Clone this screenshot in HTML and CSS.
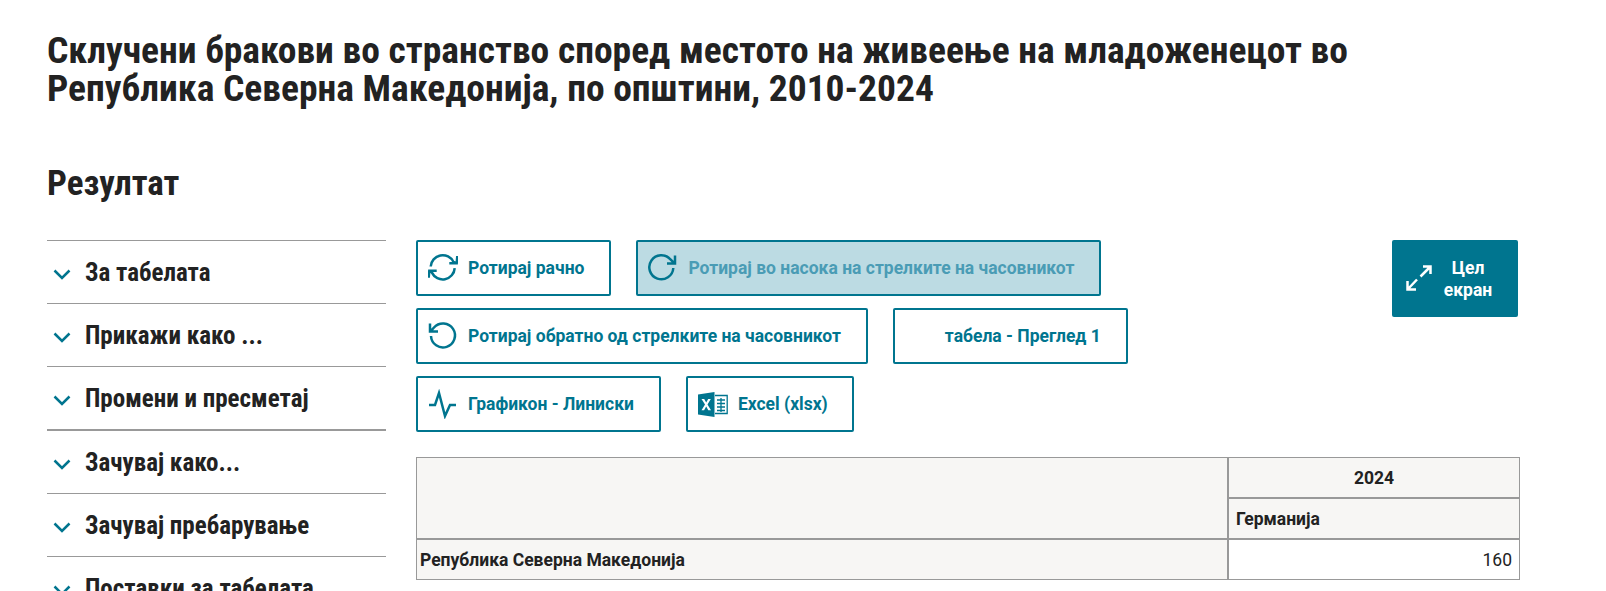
FILE: index.html
```html
<!DOCTYPE html>
<html lang="mk">
<head>
<meta charset="utf-8">
<title>Резултат</title>
<link rel="stylesheet" href="styles.css">
</head>
<body>
<main class="page">
<h1 class="title">Склучени бракови во странство според местото на живеење на младоженецот во Република Северна Македонија, по општини, 2010-2024</h1>
<h2 class="result">Резултат</h2>
<div class="cols">
<nav class="side">
<div class="acc"><svg class="chev" viewBox="0 0 18 11"><path d="M1.500 1.500 9 9l7.500-7.500"/></svg>За табелата</div>
<div class="acc"><svg class="chev" viewBox="0 0 18 11"><path d="M1.500 1.500 9 9l7.500-7.500"/></svg>Прикажи како ...</div>
<div class="acc acc-thick"><svg class="chev" viewBox="0 0 18 11"><path d="M1.500 1.500 9 9l7.500-7.500"/></svg>Промени и пресметај</div>
<div class="acc"><svg class="chev" viewBox="0 0 18 11"><path d="M1.500 1.500 9 9l7.500-7.500"/></svg>Зачувај како...</div>
<div class="acc"><svg class="chev" viewBox="0 0 18 11"><path d="M1.500 1.500 9 9l7.500-7.500"/></svg>Зачувај пребарување</div>
<div class="acc"><svg class="chev" viewBox="0 0 18 11"><path d="M1.500 1.500 9 9l7.500-7.500"/></svg>Поставки за табелата</div>
</nav>
<section class="content">
<div class="top">
<div class="btns">
<button class="btn"><svg class="ic" viewBox="0 1 30 30"><path d="M2.700 14.500A12 12 0 0 1 25.500 10l3.200 1.300M29.300 4l-.6 7.300h-7.400M26.700 16.100A12 12 0 0 1 3.900 20.600l-2.600-1.900M.7 25.700l.6-7h7.400"/></svg>Ротирај рачно</button>
<button class="btn on"><svg class="ic" viewBox="0 1 30 30"><path d="M25.300 16A12 12 0 1 1 22.500 7.500l4 3.800M27 3.500v8h-8"/></svg><span class="dim">Ротирај во насока на стрелките на часовникот</span></button>
<button class="btn"><svg class="ic" viewBox="0 1 30 30"><path d="M3 16A12 12 0 1 0 6 7.500l-3.500 3.800M2 3.500v8h8"/></svg>Ротирај обратно од стрелките на часовникот</button>
<button class="btn plain">табела - Преглед 1</button>
<button class="btn"><svg class="ic" viewBox="0 -1 30 30"><path d="M1 15h6l4-12 6 23 5-11h6"/></svg>Графикон - Линиски</button>
<button class="btn btn-xl"><svg class="xl" viewBox="0 0 30 25"><path class="xl-a" d="M0 2.500 16.500 0v25L0 22.500z"/><path class="xl-b" d="M3.500 7h2.700l2 3.600L10.200 7h2.600l-3.300 5.500 3.500 5.800h-2.700l-2.100-3.800-2.100 3.800H3.500L7 12.500z"/><path class="xl-c" d="M17 3.500h12.200v18H17M19 8h8M19 11.500h8M19 15h8M19 18.500h8M23 6v14"/></svg>Excel (xlsx)</button>
</div>
<button class="full"><svg class="full-ic" viewBox="0 0 26 26"><path d="M14.500 11.500 24.500 1.500M17 1.500h7.500V9M11 14.500 1.500 24.500M1.500 16v8.500H10"/></svg><span>Цел<br>екран</span></button>
</div>
<table class="tbl">
<tr><td class="hd" rowspan="2"></td><td class="hd ctr">2024</td></tr>
<tr><td class="hd">Германија</td></tr>
<tr><td class="hd row">Република Северна Македонија</td><td class="val">160</td></tr>
</table>
</section>
</div>
</main>
</body>
</html>
```
FILE: styles.css
```css
* { box-sizing: border-box; }
html, body { margin: 0; height: 591px; overflow: hidden; background: #fff; }
body { font-family: Roboto, "Liberation Sans", sans-serif; color: #222; }
.page { padding: 31px 47px 0; }
.title { margin: 0; width: 1340px; font: 700 37.500px/38px Roboto, sans-serif; font-stretch: condensed; }
.result { margin: 58px 0 0; font: 700 35px/37px Roboto, sans-serif; font-stretch: condensed; }
.cols { display: flex; gap: 30px; margin-top: 38px; }
.side { width: 339px; flex: none; }
.acc { height: 63px; border-top: 1px solid #999; display: flex; align-items: center; gap: 14px; padding-left: 6px; font: 700 25px Roboto, sans-serif; font-stretch: condensed; }
.acc-thick { height: 64px; border-bottom: 1px solid #999; }
.chev { width: 18px; height: 11px; margin-top: 5px; fill: none; stroke: #00758f; stroke-width: 2.500; }
.content { width: 1104px; }
.top { display: flex; justify-content: space-between; align-items: flex-start; }
.btns { display: flex; flex-wrap: wrap; gap: 12px 25px; width: 720px; }
.btn { height: 56px; display: flex; align-items: center; gap: 10px; padding: 0 25px 0 10px; border: 2px solid #00758f; border-radius: 2px; background: #fff; color: #00758f; font: 700 17.500px Roboto, sans-serif; white-space: nowrap; }
.btn.on { background: #bcdbe3; }
.btn-xl { padding-right: 24px; }
.dim { color: #4a9cb5; }
.btn.plain { padding-left: 50px; }
.ic { width: 30px; height: 30px; fill: none; stroke: #00758f; stroke-width: 2.500; }
.xl { width: 30px; height: 25px; }
.xl-a { fill: #00758f; }
.xl-b { fill: #fff; }
.xl-c { fill: none; stroke: #00758f; stroke-width: 1.300; }
.full { width: 126px; height: 77px; margin-right: 2px; display: flex; align-items: center; gap: 0; padding: 0 14px; border: 0; border-radius: 2px; background: #00758f; color: #fff; font: 700 17.500px/22px Roboto, sans-serif; }
.full span { text-align: center; flex: 1; }
.full-ic { width: 26px; height: 26px; margin-top: -2px; flex: none; fill: none; stroke: #fff; stroke-width: 2.500; }
.tbl { width: 1104px; margin-top: 25px; border-collapse: separate; border-spacing: 0; font-size: 17.500px; }
.tbl td { height: 41px; border: 1px solid #999; padding: 0 7px; }
.hd { background: #f7f6f4; font-weight: 700; }
.ctr { text-align: center; width: 292px; }
.row { padding-left: 3px !important; }
.val { text-align: right; }
```
